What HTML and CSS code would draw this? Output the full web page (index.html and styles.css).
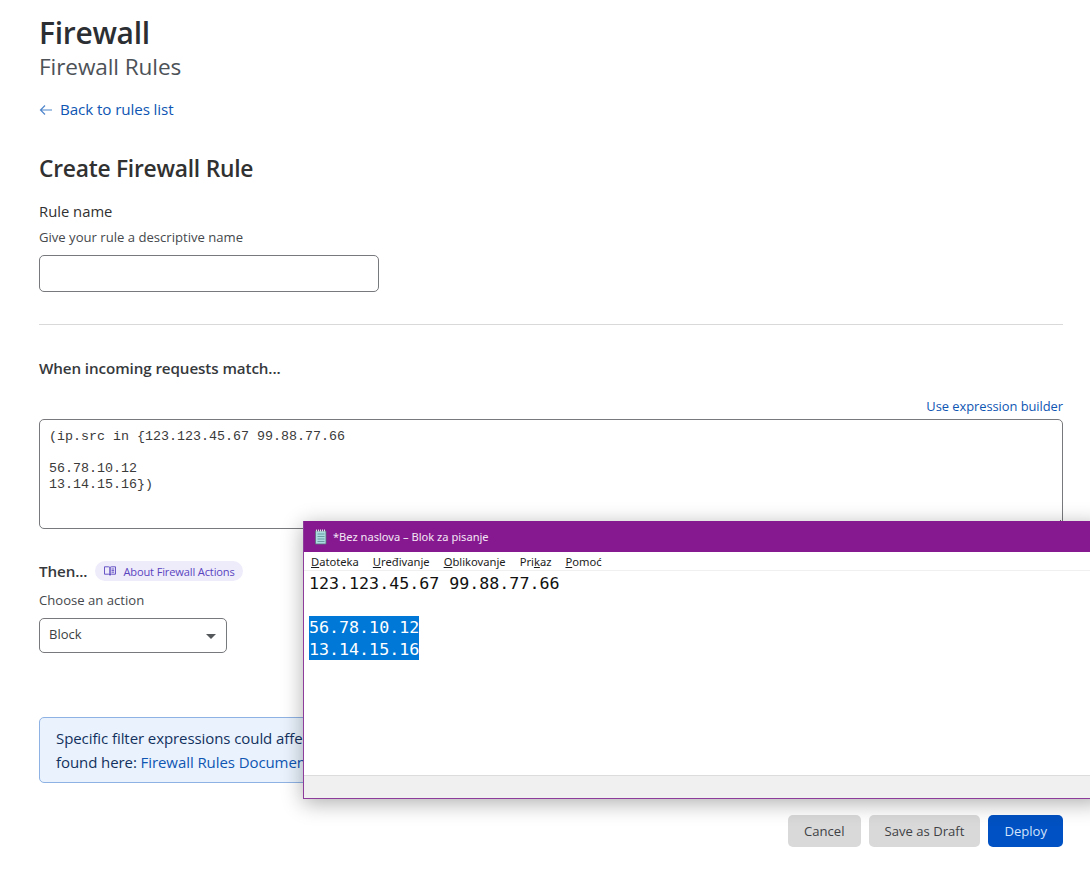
FILE: index.html
```html
<!DOCTYPE html>
<html lang="en">
<head>
<meta charset="utf-8">
<title>Firewall Rules</title>
<link rel="stylesheet" href="styles.css">
</head>
<body>
<main class="page">
  <h1 class="title">Firewall</h1>
  <p class="subtitle">Firewall Rules</p>
  <a class="back" href="#"><svg class="back-icon" viewBox="0 0 14 12" width="14" height="12"><path d="M13 6H1.5M6 1.5 1.5 6 6 10.5" fill="none" stroke="#4f86cc" stroke-width="1.2"/></svg>Back to rules list</a>
  <h2 class="form-title">Create Firewall Rule</h2>
  <label class="label">Rule name</label>
  <p class="hint">Give your rule a descriptive name</p>
  <input class="name-input" type="text">
  <hr class="divider">
  <h3 class="section">When incoming requests match...</h3>
  <div class="builder-row"><a class="link" href="#">Use expression builder</a></div>
  <textarea class="expr" spellcheck="false">(ip.src in {123.123.45.67 99.88.77.66

56.78.10.12
13.14.15.16})</textarea>
  <div class="then-row">
    <h3 class="section then">Then...</h3>
    <a class="pill" href="#"><svg viewBox="0 0 12 10" width="12" height="10"><path d="M.5.8h4.2c.7 0 1.3.4 1.3 1v7.4c0-.6-.6-1-1.3-1H.5zM11.5.8H7.3c-.7 0-1.3.4-1.3 1v7.4c0-.6.6-1 1.3-1h4.2zM7.5 3h2.7M7.5 4.6h2.7M7.5 6.2h2.7" fill="none" stroke="#5a45bf" stroke-width=".9"/></svg>About Firewall Actions</a>
  </div>
  <p class="hint action-hint">Choose an action</p>
  <div class="select"><span>Block</span><i class="caret"></i></div>
  <div class="alert">Specific filter expressions could affect the behaviour of your website. More information about these expressions can be<br>found here: <a class="alert-link" href="#">Firewall Rules Documentation</a></div>
  <div class="actions">
    <button class="btn">Cancel</button>
    <button class="btn">Save as Draft</button>
    <button class="btn primary">Deploy</button>
  </div>
</main>
<section class="notepad">
  <header class="np-title">
    <svg viewBox="0 0 16 16" width="16" height="16"><path d="M2.5 2h10.5v13H2.5z" fill="#a9dbe0" stroke="#5c6f78" stroke-width=".8"/><path d="M4.5 5h7M4.5 7.5h7M4.5 10h7M4.5 12.5h7" stroke="#5e8a94" stroke-width=".8"/><path d="M3.5 2.5v-2M5.5 2.5v-2M7.5 2.5v-2M9.5 2.5v-2M11.5 2.5v-2" stroke="#dfe6ea" stroke-width="1"/></svg>
    <span>*Bez naslova – Blok za pisanje</span>
  </header>
  <nav class="np-menu">
    <span><u>D</u>atoteka</span><span><u>U</u>ređivanje</span><span><u>O</u>blikovanje</span><span>Pri<u>k</u>az</span><span><u>P</u>omoć</span>
  </nav>
  <div class="np-body">
    <div class="np-line">123.123.45.67 99.88.77.66</div>
    <div class="np-line">&nbsp;</div>
    <div class="np-line"><span class="sel">56.78.10.12</span></div>
    <div class="np-line"><span class="sel">13.14.15.16</span></div>
  </div>
  <footer class="np-status"></footer>
</section>
</body>
</html>
```
FILE: styles.css
```css
* { box-sizing: border-box; }
html, body { margin: 0; padding: 0; }
body {
  width: 1090px;
  height: 870px;
  overflow: hidden;
  position: relative;
  background: #fff;
  color: #313131;
  font-family: "Open Sans", "Noto Sans", sans-serif;
}
.page { display: flex; flex-direction: column; padding: 13px 27px 0 39px; height: 870px; }
.title { margin: 0; font-size: 30px; line-height: 40px; font-weight: 600; color: #2b2f33; letter-spacing: -.3px; }
.subtitle { margin: 0; font-size: 22.6px; line-height: 28px; color: #4d5258; letter-spacing: -.1px; }
.back { display: flex; align-items: center; margin-top: 16px; height: 24px; font-size: 15.2px; color: #0f56b3; text-decoration: none; letter-spacing: -.1px; }
.back-icon { margin: 2px 7px 0 0; }
.form-title { margin: 33px 0 0; font-size: 22.8px; line-height: 30px; font-weight: 600; color: #313131; letter-spacing: -.25px; }
.label { margin-top: 17px; font-size: 14.8px; line-height: 20px; }
.hint { margin: 7px 0 0; font-size: 13.1px; line-height: 18px; color: #45484c; }
.name-input { width: 340px; height: 37px; margin-top: 9px; border: 1px solid #77797c; border-radius: 5px; background: #fff; display: block; }
.divider { width: 100%; margin: 32px 0 0; border: 0; border-top: 1px solid #d9d9d9; }
.section { margin: 33px 0 0; font-size: 15.2px; line-height: 20px; font-weight: 600; color: #36393c; letter-spacing: -.1px; }
.builder-row { display: flex; justify-content: flex-end; margin-top: 18px; height: 20px; line-height: 20px; }
.link { font-size: 12.9px; color: #0f56b3; text-decoration: none; letter-spacing: -.05px; }
.expr {
  display: block;
  width: 100%;
  height: 110px;
  margin-top: 3px;
  padding: 9px 9px;
  border: 1px solid #77797c;
  border-radius: 5px;
  resize: vertical;
  background: #fff;
  color: #3a3a3a;
  font-family: "Liberation Mono", monospace;
  font-size: 13.33px;
  line-height: 16px;
  outline: 0;
}
.then-row { display: flex; align-items: center; gap: 8px; margin-top: 32px; height: 20px; }
.then { margin: 0; }
.pill { display: flex; align-items: center; gap: 7px; height: 20px; padding: 0 8px 0 9px; border-radius: 10px; background: #eeebfb; color: #5a45bf; font-size: 11.1px; letter-spacing: -.15px; text-decoration: none; }
.action-hint { margin-top: 10px; }
.select { display: flex; align-items: center; justify-content: space-between; width: 188px; height: 35px; margin-top: 9px; padding: 0 10px 3px 9px; border: 1px solid #77797c; border-radius: 5px; font-size: 13px; color: #3c3f42; }
.caret { width: 0; height: 0; border-left: 5px solid transparent; border-right: 5px solid transparent; border-top: 5px solid #55585b; margin-top: 5px; }
.alert { height: 66px; margin-top: 64px; padding: 8px 16px; border: 1px solid #8fb2e4; border-radius: 5px; background: #eaf3fd; color: #12315e; font-size: 15px; line-height: 24px; white-space: nowrap; overflow: hidden; letter-spacing: -.08px; }
.alert-link { color: #0f56b3; text-decoration: none; }
.actions { display: flex; justify-content: flex-end; gap: 8px; margin-top: 32px; }
.btn { height: 32px; padding: 0 16px; border: 0; border-radius: 5px; background: #d9d9d9; color: #3f4245; font: 13.1px "Open Sans", "Noto Sans", sans-serif; }
.btn.primary { background: #0051c3; color: #d3e3fb; }

.notepad {
  position: absolute;
  left: 303px;
  top: 521px;
  width: 800px;
  height: 278px;
  display: flex;
  flex-direction: column;
  border: 1px solid #8e3c9c;
  border-top: 0;
  background: #fff;
  box-shadow: 0 4px 20px rgba(0, 0, 0, .32);
  font-family: "Noto Sans", "Open Sans", sans-serif;
}
.np-title { display: flex; align-items: center; gap: 4px; height: 31px; padding: 0 0 0 9px; background: #86198f; color: #f3e7f5; font-size: 11.1px; flex: none; }
.np-menu { display: flex; gap: 14px; height: 19px; padding: 0 0 0 7px; align-items: center; border-bottom: 1px solid #f0f0f0; font-size: 11.2px; color: #1c1c1c; flex: none; }
.np-body { flex: 1; padding: 1px 0 0 5px; font-family: "DejaVu Sans Mono", monospace; font-size: 16.65px; line-height: 24px; color: #111; }
.np-line { height: 22px; }
.sel { display: block; width: fit-content; height: 22px; background: #0078d7; color: #fff; }
.np-status { height: 23px; flex: none; background: #f0f0f0; border-top: 1px solid #dcdcdc; }
```
